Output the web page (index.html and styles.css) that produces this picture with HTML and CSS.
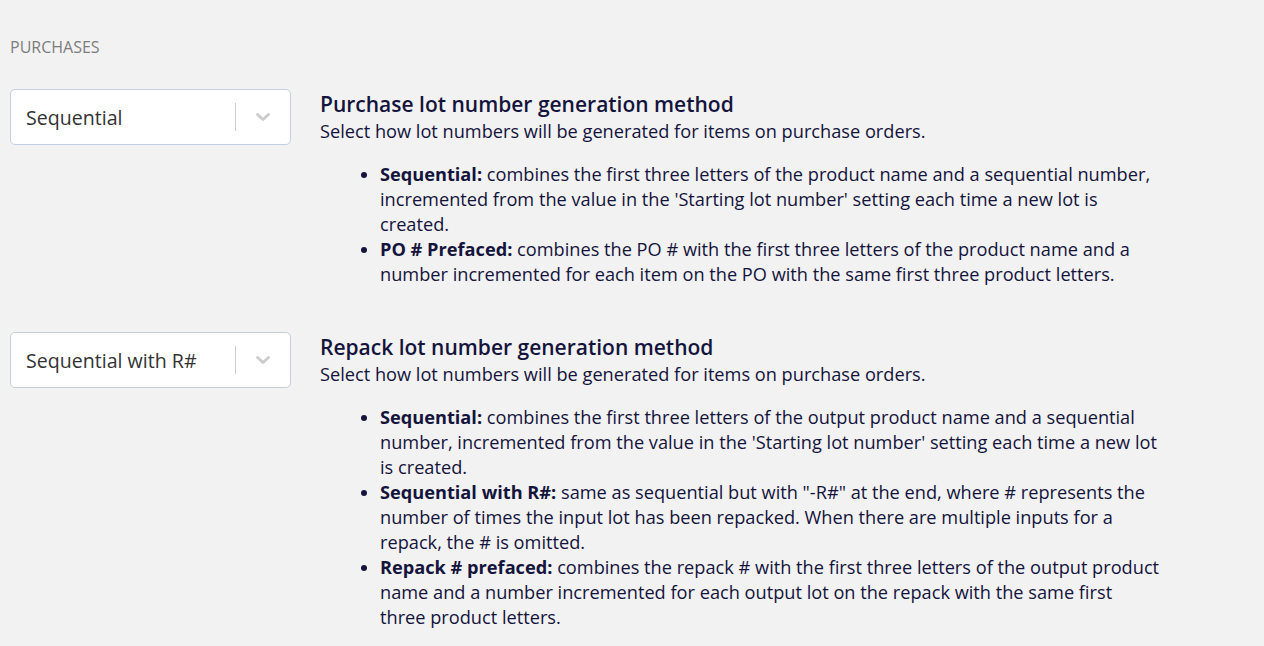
FILE: index.html
```html
<!DOCTYPE html>
<html lang="en">
<head>
  <meta charset="UTF-8" />
  <meta name="viewport" content="width=device-width, initial-scale=1.0" />
  <title>Lot settings</title>
  <link rel="stylesheet" href="styles.css">
</head>
<body>
  <div class="settings">
    <div class="section-label">PURCHASES</div>

    <div class="setting-row">
      <div class="select-box">
        <div class="select-value">Sequential</div>
        <div class="select-sep"></div>
        <div class="select-arrow">
          <svg width="20" height="20" viewBox="0 0 20 20"><path d="M4.5 7.5 L10 12.5 L15.5 7.5" fill="none" stroke="#cccccc" stroke-width="3" stroke-linecap="round" stroke-linejoin="round"/></svg>
        </div>
      </div>
      <div class="setting-info">
        <h2>Purchase lot number generation method</h2>
        <p>Select how lot numbers will be generated for items on purchase orders.</p>
        <ul>
          <li><b>Sequential:</b> combines the first three letters of the product name and a sequential number, incremented from the value in the 'Starting lot number' setting each time a new lot is created.</li>
          <li><b>PO # Prefaced:</b> combines the PO # with the first three letters of the product name and a number incremented for each item on the PO with the same first three product letters.</li>
        </ul>
      </div>
    </div>

    <div class="setting-row">
      <div class="select-box">
        <div class="select-value">Sequential with R#</div>
        <div class="select-sep"></div>
        <div class="select-arrow">
          <svg width="20" height="20" viewBox="0 0 20 20"><path d="M4.5 7.5 L10 12.5 L15.5 7.5" fill="none" stroke="#cccccc" stroke-width="3" stroke-linecap="round" stroke-linejoin="round"/></svg>
        </div>
      </div>
      <div class="setting-info">
        <h2>Repack lot number generation method</h2>
        <p>Select how lot numbers will be generated for items on purchase orders.</p>
        <ul>
          <li><b>Sequential:</b> combines the first three letters of the output product name and a sequential number, incremented from the value in the 'Starting lot number' setting each time a new lot is created.</li>
          <li><b>Sequential with R#:</b> same as sequential but with "-R#" at the end, where # represents the number of times the input lot has been repacked. When there are multiple inputs for a repack, the # is omitted.</li>
          <li><b>Repack # prefaced:</b> combines the repack # with the first three letters of the output product name and a number incremented for each output lot on the repack with the same first three product letters.</li>
        </ul>
      </div>
    </div>
  </div>
</body>
</html>
```

FILE: styles.css
```css
body {
  margin: 0;
  background: #f2f2f2;
  font-family: 'Open Sans', 'Noto Sans', sans-serif;
  color: #14143c;
}

.settings {
  padding: 36px 10px 0;
}

.section-label {
  font-size: 16px;
  color: #7d7d7d;
  line-height: 22px;
  margin-bottom: 31px;
}

.setting-row {
  display: flex;
  gap: 29px;
  margin-bottom: 45px;
}

.select-box {
  flex: none;
  width: 279px;
  height: 54px;
  background: #fff;
  border: 1px solid #c3cfe0;
  border-radius: 5px;
  display: flex;
  align-items: center;
}

.select-value {
  flex: 1;
  padding-left: 15px;
  font-size: 19.6px;
  color: #333;
}

.select-sep {
  width: 1px;
  height: 28px;
  background: #cccccc;
}

.select-arrow {
  width: 54px;
  display: flex;
  justify-content: center;
  align-items: center;
}

.setting-info {
  width: 842px;
}

.setting-info h2 {
  margin: 0;
  font-size: 21px;
  font-weight: 600;
  line-height: 29px;
  margin-top: 1px;
}

.setting-info p {
  margin: 0;
  font-size: 18.2px;
  line-height: 25px;
}

.setting-info ul {
  margin: 18px 0 0;
  padding-left: 60px;
  font-size: 18.2px;
  line-height: 25px;
}
```
